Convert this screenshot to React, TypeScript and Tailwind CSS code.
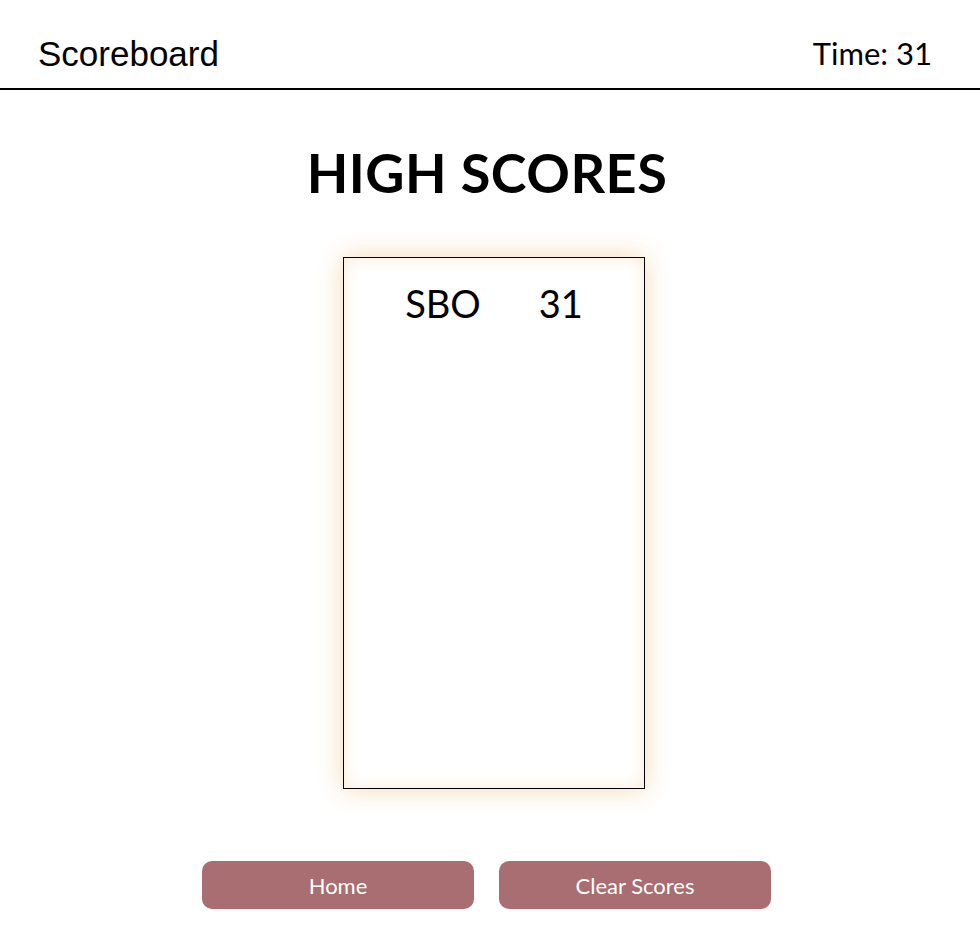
const scores = [{ name: "SBO", score: 31 }];

const App = () => {
  return (
    <div className="min-h-screen bg-white text-black">
      <header className="flex h-[90px] items-center justify-between border-b-2 border-black pl-[38px] pr-[48px] pt-[18px]">
        <h1 className="text-[35px] leading-none font-['Liberation_Sans',Arial,sans-serif]">
          Scoreboard
        </h1>
        <div className="text-[31px] leading-none font-['Lato','Open_Sans',sans-serif]">
          Time: 31
        </div>
      </header>

      <main className="flex flex-col items-center font-['Lato','Open_Sans',sans-serif]">
        <h2 className="mt-[56px] pr-[6px] text-[54px] font-bold leading-none tracking-[0.5px]">
          HIGH SCORES
        </h2>

        <div className="mt-[57px] pl-2">
          <div className="h-[532px] w-[302px] border border-black bg-white pt-[26px] shadow-[0_0_26px_#f5dab4,inset_0_0_16px_#fae9d2]">
            {scores.map((s) => (
              <div key={s.name} className="flex justify-center gap-[58px] text-[38px] leading-none">
                <span>{s.name}</span>
                <span>{s.score}</span>
              </div>
            ))}
          </div>
        </div>

        <div className="mt-[72px] flex gap-[25px] pr-[7px]">
          <button className="h-[48px] w-[272px] rounded-[10px] bg-[#a96e71] text-[22px] text-white">
            Home
          </button>
          <button className="h-[48px] w-[272px] rounded-[10px] bg-[#a96e71] text-[22px] text-white">
            Clear Scores
          </button>
        </div>
      </main>
    </div>
  );
};

export default App;
